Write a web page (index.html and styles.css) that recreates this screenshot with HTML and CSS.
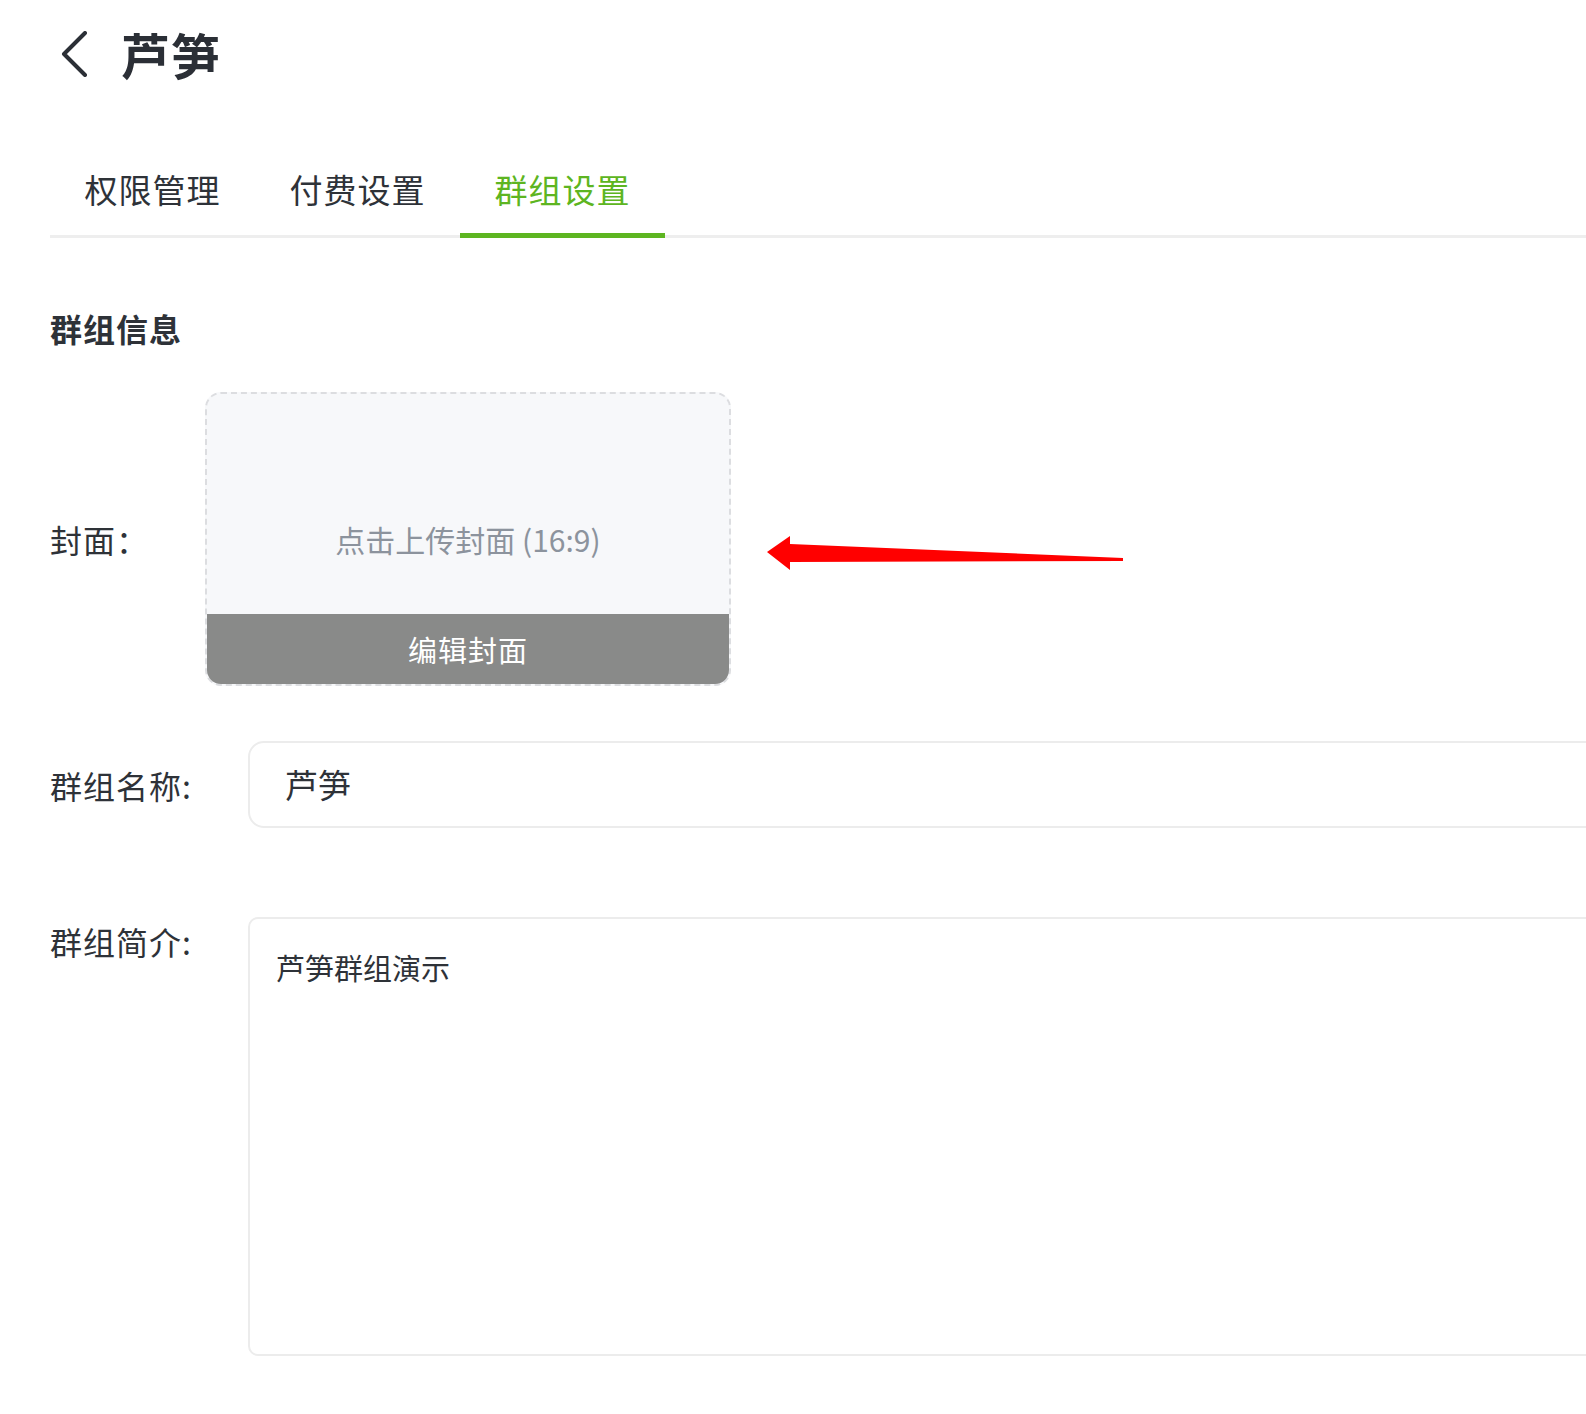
FILE: index.html
```html
<!DOCTYPE html>
<html lang="zh-CN">
<head>
<meta charset="utf-8">
<title>芦笋 - 群组设置</title>
<link rel="stylesheet" href="styles.css">
</head>
<body>
<div class="page">
  <header class="header">
    <span class="back">
      <svg width="30" height="46" viewBox="0 0 30 46"><path d="M26 2 L5 23 L26 44" fill="none" stroke="#2b2f36" stroke-width="4" stroke-linecap="round" stroke-linejoin="round"/></svg>
    </span>
    <h1 class="title">芦笋</h1>
  </header>

  <nav class="tabs">
    <div class="tab">权限管理</div>
    <div class="tab">付费设置</div>
    <div class="tab active">群组设置</div>
  </nav>

  <h2 class="section-title">群组信息</h2>

  <div class="row row-cover">
    <div class="label label-cover">封面：</div>
    <div class="cover">
      <div class="cover-upload">点击上传封面 (16:9)</div>
      <div class="cover-edit">编辑封面</div>
    </div>
  </div>

  <div class="row row-name">
    <div class="label">群组名称:</div>
    <div class="input">芦笋</div>
  </div>

  <div class="row row-desc">
    <div class="label label-top">群组简介:</div>
    <div class="textarea">芦笋群组演示</div>
  </div>

  <svg class="arrow" width="370" height="40" viewBox="0 0 370 40">
    <polygon points="0,17 23,1 23,9 356,23 356,26 23,27 23,35" fill="#ff0000"/>
  </svg>
</div>
</body>
</html>
```

FILE: styles.css
```css
html, body {
  margin: 0;
  padding: 0;
  background: #ffffff;
  overflow: hidden;
}

body {
  font-family: "Noto Sans CJK SC", "Noto Sans", sans-serif;
  color: #2e3238;
}

.page {
  position: relative;
  width: 1586px;
  height: 1414px;
  padding-left: 50px;
  box-sizing: border-box;
}

.header {
  height: 108px;
  display: flex;
  align-items: center;
}

.back {
  display: flex;
  margin-left: 9px;
  width: 30px;
  height: 46px;
}

.title {
  margin: 0 0 0 32px;
  font-size: 49px;
  font-weight: 700;
  line-height: 60px;
  color: #2b2f36;
  letter-spacing: 1px;
}

.tabs {
  margin-top: 35px;
  display: flex;
  border-bottom: 3px solid #eeeeee;
  margin-right: -60px;
}

.tab {
  width: 205px;
  box-sizing: border-box;
  text-align: center;
  padding-top: 22px;
  height: 92px;
  font-size: 33px;
  line-height: 48px;
  color: #2e3238;
  letter-spacing: 1px;
}

.tab.active {
  color: #5db521;
  border-bottom: 5px solid #5db521;
  margin-bottom: -3px;
  height: 95px;
}

.section-title {
  margin: 66px 0 0 0;
  font-size: 32px;
  font-weight: 700;
  line-height: 48px;
  color: #2e3238;
  letter-spacing: 1px;
}

.row {
  display: flex;
  align-items: center;
}

.label {
  width: 198px;
  flex-shrink: 0;
  font-size: 32px;
  line-height: 48px;
  color: #2e3238;
  letter-spacing: 1px;
}

.label-cover {
  width: 155px;
}

.row-cover {
  margin-top: 40px;
}

.cover {
  width: 526px;
  height: 294px;
  box-sizing: border-box;
  border: 2px dashed #dcdde0;
  border-radius: 16px;
  background: #f7f8fa;
  overflow: hidden;
  display: flex;
  flex-direction: column;
}

.cover-upload {
  flex: 1;
  box-sizing: border-box;
  padding-top: 125px;
  text-align: center;
  font-size: 30px;
  line-height: 40px;
  color: #8c939d;
}

.cover-edit {
  height: 70px;
  background: #898a89;
  color: #ffffff;
  font-size: 29px;
  line-height: 70px;
  text-align: center;
  letter-spacing: 1px;
}

.row-name {
  margin-top: 55px;
}

.input {
  width: 1500px;
  flex-shrink: 0;
  height: 87px;
  box-sizing: border-box;
  border: 2px solid #ececec;
  border-radius: 16px;
  padding-left: 35px;
  font-size: 33px;
  line-height: 83px;
  color: #2e3238;
}

.row-desc {
  margin-top: 89px;
  align-items: flex-start;
}

.label-top {
  margin-top: 0;
}

.textarea {
  width: 1500px;
  flex-shrink: 0;
  height: 439px;
  box-sizing: border-box;
  border: 2px solid #ececec;
  border-radius: 10px;
  padding: 28px 0 0 26px;
  font-size: 29px;
  line-height: 40px;
  color: #2e3238;
}

.arrow {
  position: absolute;
  left: 767px;
  top: 535px;
}
```
